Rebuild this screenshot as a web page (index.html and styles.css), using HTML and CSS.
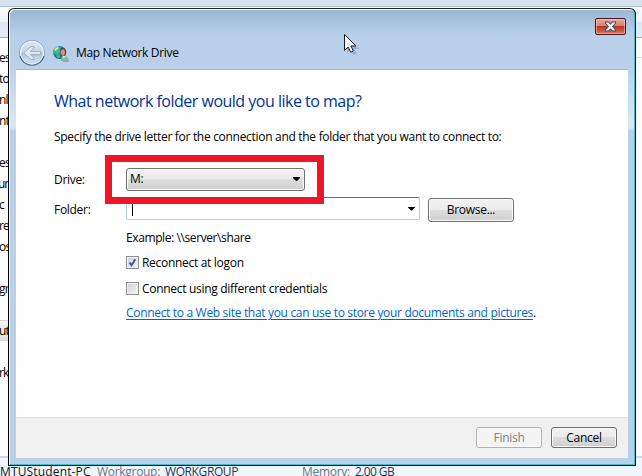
FILE: index.html
```
<!DOCTYPE html>
<html lang="en">
<head>
<meta charset="utf-8">
<title>Map Network Drive</title>
<link rel="stylesheet" href="styles.css">
</head>
<body>
<div class="explorer">
  <div class="address"></div>
  <div class="toolbar"></div>
  <div class="body">
    <ul class="tree">
      <li>es</li><li>to</li><li>nl</li><li>nt</li><li></li><li>es</li><li class="wide">um</li><li>c</li><li>re</li><li>os</li><li></li><li>gr</li><li></li><li class="selected">ut</li><li></li><li>rk</li>
    </ul>
    <div class="files"></div>
  </div>
  <div class="details">
    <span class="pc">MTUStudent-PC</span><span class="key wg">Workgroup:</span><span class="val wgv">WORKGROUP</span><span class="key mem">Memory:</span><span class="val memv">2.00 GB</span>
  </div>
</div>

<div class="window">
  <div class="titlebar">
    <svg class="back" width="28" height="28" viewBox="0 0 28 28">
      <defs><linearGradient id="bk" x1="0" y1="0" x2="0" y2="1"><stop offset="0" stop-color="#dce6f0"/><stop offset=".48" stop-color="#c6d5e5"/><stop offset=".52" stop-color="#b2c6dc"/><stop offset="1" stop-color="#d4e3f3"/></linearGradient></defs>
      <circle cx="14" cy="14" r="12.6" fill="none" stroke="#8099b4" stroke-width="1"/>
      <circle cx="14" cy="14" r="11.6" fill="url(#bk)" stroke="#eef5fb" stroke-width="1.2"/>
      <path d="M2 17A12.400 12.400 0 0 0 26 17" fill="none" stroke="#566b82" stroke-width="1.100"/>
      <path d="M5.500 14l7.500-6.500h2.800v1.700l-3.300 3.200H22.500v3.200h-10l3.300 3.200v1.700H13z" fill="#dfe8f1" stroke="#94a8bf" stroke-width=".9" stroke-linejoin="round"/>
    </svg>
    <svg class="globe" width="18" height="18" viewBox="0 0 18 18">
      <defs><radialGradient id="gl" cx=".3" cy=".3" r=".8"><stop offset="0" stop-color="#8fd8f5"/><stop offset=".45" stop-color="#2685d0"/><stop offset="1" stop-color="#123b91"/></radialGradient></defs>
      <circle cx="7.500" cy="7.500" r="6.500" fill="url(#gl)"/>
      <path d="M2 4l3-2 3 1-1 3-3 1-1 2-2-2zM4.500 8.500l3 1 1 2.500-2 2-2.500-3z" fill="#42b957"/>
      <path d="M2.500 4l3-2 1.500 1-3.500 3z" fill="#c9f5c8"/>
      <path d="M8.300 4.300Q9.500 1.500 12.300 3Q14.800 4.500 14 9l-2 2-3-2z" fill="#68412a"/>
      <ellipse cx="11" cy="7.200" rx="1.900" ry="3" fill="#d5a174"/>
      <path d="M9.300 15.500Q9 11 11 11l2.500.4q3.300 1.500 3 5-3.500 1.200-7.200-.9z" fill="#87b99f" stroke="#6fa58d" stroke-width=".6"/>
      <path d="M10.500 10.500l1.300 3 1.700-2.300z" fill="#e8f2ec"/>
    </svg>
    <span class="title">Map Network Drive</span>
    <button class="close" aria-label="Close"><svg width="13" height="11" viewBox="0 0 13 11"><path d="M1.500 1h3.200l1.800 1.900L8.300 1h3.200v1.300L8.600 5.500l2.900 3.200V10H8.300L6.500 8.100 4.700 10H1.500V8.700l2.900-3.200-2.900-3.200z" fill="#f3f3f5" stroke="#4c5368" stroke-width="1.100"/></svg></button>
  </div>

  <div class="panel">
    <div class="content">
      <h1>What network folder would you like to map?</h1>
      <p class="intro">Specify the drive letter for the connection and the folder that you want to connect to:</p>
      <div class="row drive">
        <label>Drive:</label>
        <div class="select"><span>M:</span><i class="arrow"></i><div class="highlight"></div></div>
      </div>
      <div class="row folder">
        <label>Folder:</label>
        <div class="combo"><i class="caret"></i><i class="arrow"></i></div>
        <button class="btn browse"><span>Browse...</span></button>
      </div>
      <p class="example">Example: \\server\share</p>
      <div class="option"><span class="box"><svg width="9" height="9" viewBox="0 0 9 9"><path d="M1.500 4.500L3.500 7.200 7.300 1.200" fill="none" stroke="#41569b" stroke-width="1.900"/></svg></span><span class="reconnect">Reconnect at logon</span></div>
      <div class="option second"><span class="box"></span><span class="creds">Connect using different credentials</span></div>
      <p class="link"><a>Connect to a Web site that you can use to store your documents and pictures</a>.</p>
    </div>
    <div class="footer">
      <button class="btn disabled"><span>Finish</span></button>
      <button class="btn"><span>Cancel</span></button>
    </div>
  </div>
</div>

<svg class="cursor" width="17" height="23" viewBox="0 0 17 23">
  <path d="M3 3v16l4-3 2.500 5 3-1-2-5h5z" fill="#526b8a" opacity=".3"/>
  <path d="M.5 .5V16.500l3.700-3.500 2.500 5.200 2.600-1.200-2.400-5h5z" fill="#fafafa" stroke="#171b2e" stroke-width="1"/>
</svg>
</body>
</html>
```
FILE: styles.css
```
* { box-sizing: border-box; }
body {
  margin: 0;
  width: 642px;
  height: 476px;
  overflow: hidden;
  position: relative;
  font: 12px/16px "Open Sans", "Noto Sans", sans-serif;
  color: #000;
  letter-spacing: -0.3px;
  white-space: nowrap;
}
h1, p, ul { margin: 0; padding: 0; }
button { font: inherit; letter-spacing: inherit; padding: 0; }

.explorer { height: 476px; display: flex; flex-direction: column; background: #fcfcfc; }
.address { height: 7px; background: #d7e4f0; border-bottom: 1px solid #a9bdcc; }
.toolbar { height: 31px; background: linear-gradient(#f9fcfe 0, #ecf4fc 48%, #dee8f5 50%, #e3ebf7); border-bottom: 1px solid #9aabc4; }
.body { height: 420px; display: flex; border-bottom: 2px solid #c9d7ea; }
.tree { width: 8px; padding-top: 9px; list-style: none; overflow: hidden; letter-spacing: -0.8px; }
.tree li { height: 21px; line-height: 22px; text-indent: -1px; }
.tree .wide { text-indent: -2px; letter-spacing: -1.2px; }
.tree .selected { background: linear-gradient(#f5f5f5, #dedede); border: solid #d5d5d5; border-width: 1px 0; line-height: 20px; }
.files { flex: 1; margin-top: 19px; border-top: 1px solid #dedede; }
.details { flex: 1; display: flex; padding-top: 6px; background: #f1f5fc; color: #1e395b; overflow: hidden; }
.details span { line-height: 16px; flex: none; }
.pc { width: 97px; color: #10152c; letter-spacing: 0.15px; }
.key { color: #6b7687; }
.wg { width: 68px; }
.wgv { width: 137px; letter-spacing: -0.4px; }
.mem { width: 53px; }
.memv { letter-spacing: -0.6px; }

.window {
  position: absolute;
  left: 8px;
  top: 8px;
  width: 628px;
  height: 458px;
  border: 1px solid #000;
  border-top-color: #222;
  border-radius: 6px 6px 0 0;
  padding: 0 6px 6px;
  background: linear-gradient(#9ab5d0 0, #b5cee7 23px, #bad0ea 28px, #bad0ea 56px, #dae7f4 115px, #dae7f4 118px, #b9d0e9 122px);
  box-shadow: inset 1px 1px #f0f7fc, inset -1px -1px #22cbdc;
}
.titlebar { height: 60px; display: flex; }
.back { margin: 30px 0 0 2.5px; }
.globe { margin: 36px 0 0 6.5px; }
.title { margin: 36px 0 0 6px; letter-spacing: -0.33px; }
.close {
  width: 31px;
  height: 17px;
  margin: 9px 3px 0 auto;
  display: grid;
  place-items: center;
  border: 1px solid #431422;
  border-radius: 2px;
  background: linear-gradient(#e7a79b 0, #d98170 47%, #b93621 50%, #d97460);
  box-shadow: inset 0 0 0 1px rgba(255, 210, 200, .55);
}
.panel { height: 389px; display: flex; flex-direction: column; margin: 0 1px; border-top: 1px solid #a4bcd5; background: #fff; }
.content { height: 347px; padding: 21px 0 0 38px; }
h1 { font-size: 16px; line-height: 20px; font-weight: 400; color: #003399; letter-spacing: -0.5px; }
.intro { margin-top: 18px; }
.row { display: flex; }
.drive { margin-top: 22px; height: 24px; align-items: center; }
.folder { margin-top: 6px; height: 25px; align-items: center; }
label { width: 72px; }
.drive label { padding-top: 1px; }
.select {
  position: relative;
  width: 179px;
  height: 23px;
  display: flex;
  align-items: center;
  padding: 0 4px 0 3px;
  border: 1px solid #707070;
  border-radius: 3px;
  background: linear-gradient(#f2f2f2 0, #ebebeb 49%, #dddddd 50%, #cfcfcf);
  box-shadow: inset 0 0 0 1px #fafafa;
}
.highlight { position: absolute; left: -22px; top: -14px; width: 219px; height: 49px; border: 7px solid #ee152a; z-index: 2; }
.arrow { margin-left: auto; width: 7px; height: 4px; background: #000; clip-path: polygon(0 0, 100% 0, 100% 25%, 57% 100%, 43% 100%, 0 25%); }
.combo {
  width: 294px;
  height: 23px;
  margin-bottom: 2px;
  display: flex;
  align-items: center;
  padding: 0 4px 0 5px;
  border: 1px solid #b5cfe7;
  border-top-color: #3d7bad;
  border-radius: 2px;
}
.caret { width: 1px; height: 14px; background: #000; }
.btn {
  width: 66px;
  height: 21px;
  display: grid;
  place-items: center;
  color: #000;
  border: 1px solid #707070;
  border-radius: 3px;
  background: linear-gradient(#f2f2f2 0, #ebebeb 49%, #dddddd 50%, #cfcfcf);
  box-shadow: inset 0 0 0 1px #fafafa;
}
.browse { width: 86px; height: 24px; margin: 1px 0 0 8px; }
.btn.disabled { color: #838383; border-color: #adb2b5; background: #f4f4f4; }
.example { margin: 8px 0 0 72px; letter-spacing: -0.4px; }
.option { display: flex; align-items: center; height: 16px; margin: 9px 0 0 72px; gap: 3px; }
.second { margin-top: 10px; }
.box { width: 13px; height: 13px; margin-bottom: 1px; display: grid; place-items: center; border: 1px solid #8e8f8f; background: linear-gradient(135deg, #cbcfd5, #f6f6f6); box-shadow: inset 0 0 0 1px #f4f4f4; }
.link { margin: 8px 0 0 72px; letter-spacing: -0.32px; }
.link a { color: #0066cc; text-decoration: underline; text-underline-offset: 2px; text-decoration-thickness: 1px; }
.footer { flex: 1; display: flex; justify-content: flex-end; gap: 9px; padding: 9px 11px 0 0; background: #f0f0f0; border-top: 1px solid #dfdfdf; }
.cursor { position: absolute; left: 344px; top: 34px; }
```
